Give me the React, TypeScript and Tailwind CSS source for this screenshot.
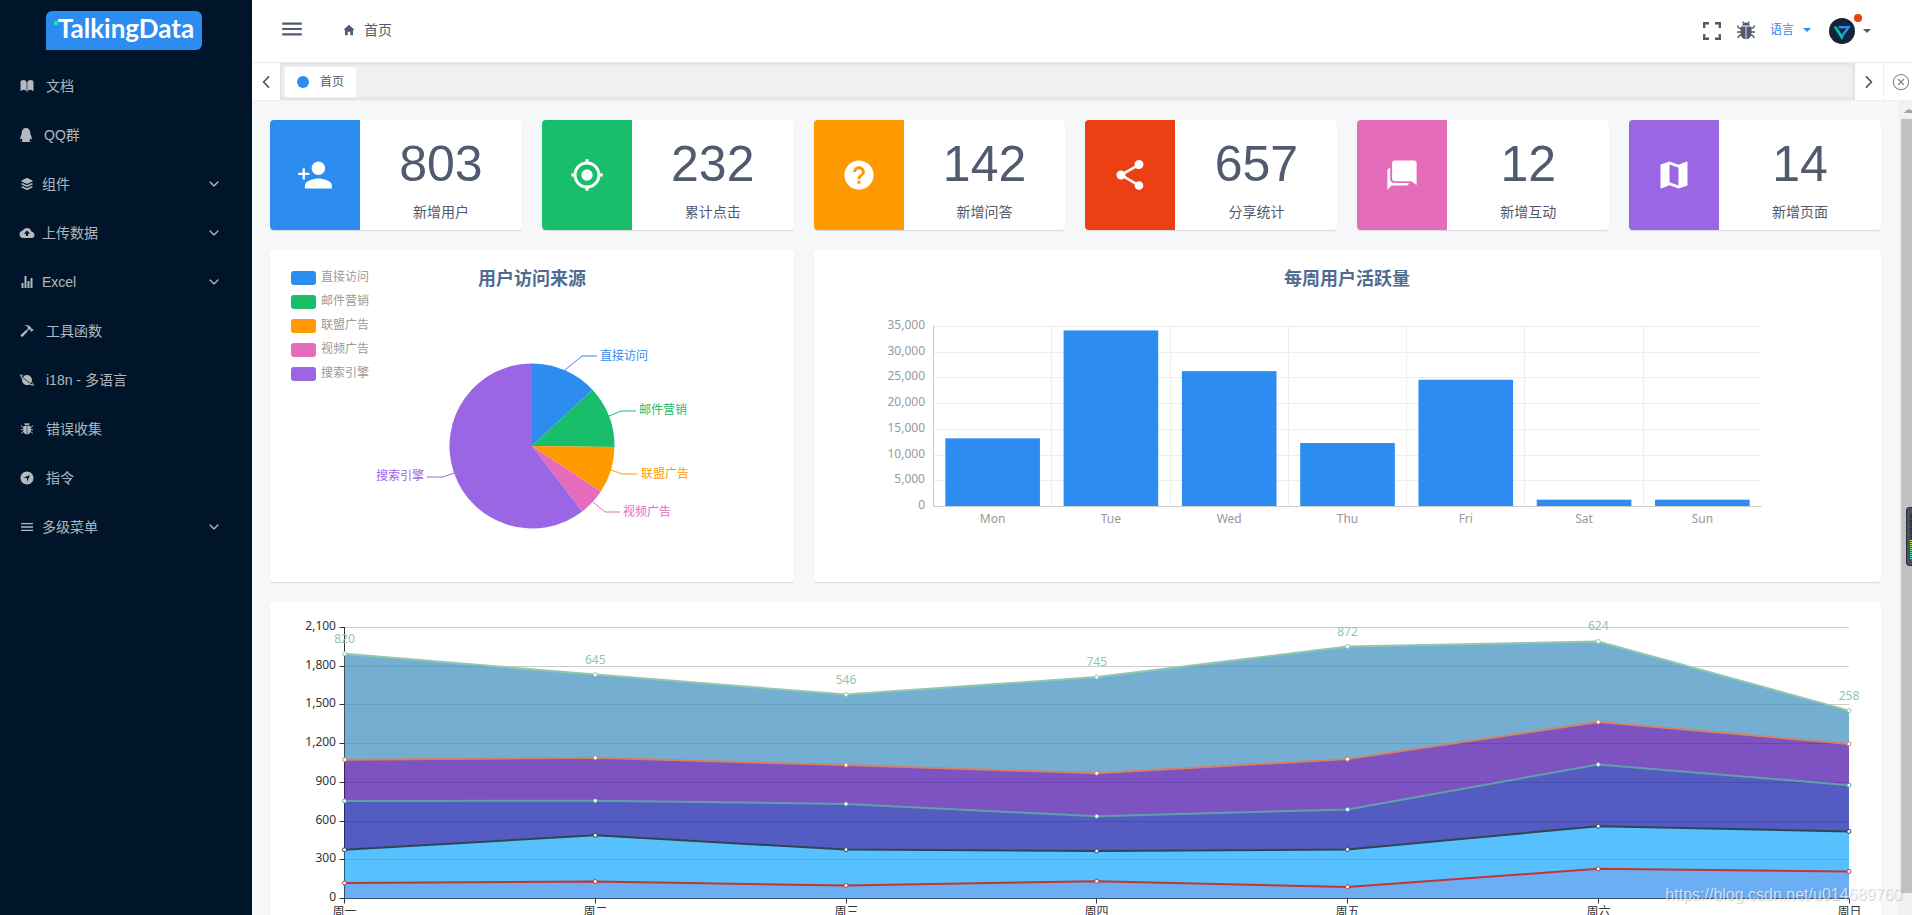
import { ReactNode } from 'react';
import {
  IoIosArrowBack,
  IoIosArrowDown,
  IoIosArrowForward,
  IoIosBook,
  IoIosCloseCircleOutline,
  IoIosHammer,
  IoIosNavigate,
  IoIosStats,
  IoLogoBuffer,
  IoMdArrowDropdown,
  IoMdChatbubbles,
  IoMdCloudUpload,
  IoMdExpand,
  IoMdHelpCircle,
  IoMdHome,
  IoMdLocate,
  IoMdMap,
  IoMdMenu,
  IoMdPersonAdd,
  IoMdPlanet,
  IoMdShare,
} from 'react-icons/io';
import { FaQq } from 'react-icons/fa';

const BugIcon = ({ size }: { size: number }) => (
  <svg viewBox="0 0 24 24" width={size} height={size} fill="currentColor">
    <path d="M8 6.500C8.600 4.700 10 3.500 12 3.500s3.400 1.200 4 3z" />
    <path d="M7 7.500h4.600v12.800C8.500 20 6.500 17.300 6.500 13.500 6.500 11 6.500 9 7 7.500zM12.400 7.500H17c.5 1.500.5 3.500.5 6 0 3.800-2 6.500-5.100 6.800z" />
    <path
      d="M3.500 6.500c.3 2 1.500 3 3.500 3M20.500 6.500c-.3 2-1.500 3-3.500 3M3 13h4M21 13h-4M4 19c.3-2 1.400-3 3.500-3M20 19c-.3-2-1.400-3-3.500-3M8.500 2.800l1.500 1.700M15.500 2.800L14 4.500"
      fill="none"
      stroke="currentColor"
      strokeWidth="1.4"
    />
  </svg>
);

const menuItems: { title: string; icon: ReactNode; children?: boolean }[] = [
  { title: '文档', icon: <IoIosBook size={16} /> },
  { title: 'QQ群', icon: <FaQq className="h-[14px] w-[14px]" /> },
  { title: '组件', icon: <IoLogoBuffer size={16} />, children: true },
  { title: '上传数据', icon: <IoMdCloudUpload size={16} />, children: true },
  { title: 'Excel', icon: <IoIosStats size={16} />, children: true },
  { title: '工具函数', icon: <IoIosHammer size={16} /> },
  { title: 'i18n - 多语言', icon: <IoMdPlanet size={16} /> },
  { title: '错误收集', icon: <BugIcon size={16} /> },
  { title: '指令', icon: <IoIosNavigate size={16} /> },
  { title: '多级菜单', icon: <IoMdMenu size={16} />, children: true },
];

const infoCards = [
  { title: '新增用户', icon: IoMdPersonAdd, count: 803, color: 'bg-[#2d8cf0]' },
  { title: '累计点击', icon: IoMdLocate, count: 232, color: 'bg-[#19be6b]' },
  { title: '新增问答', icon: IoMdHelpCircle, count: 142, color: 'bg-[#ff9900]' },
  { title: '分享统计', icon: IoMdShare, count: 657, color: 'bg-[#ed3f14]' },
  { title: '新增互动', icon: IoMdChatbubbles, count: 12, color: 'bg-[#e46cbb]' },
  { title: '新增页面', icon: IoMdMap, count: 14, color: 'bg-[#9a66e4]' },
];

const pieData = [
  { name: '直接访问', value: 335, color: '#2d8cf0', line: '295,120 312,106 327,106', x: 330, y: 110 },
  { name: '邮件营销', value: 310, color: '#19be6b', line: '339,166 351,161 366,161', x: 369, y: 164 },
  { name: '联盟广告', value: 234, color: '#ff9900', line: '341,220 352,224 367,224', x: 371, y: 228 },
  { name: '视频广告', value: 135, color: '#e46cbb', line: '323,252 335,262 350,262', x: 353, y: 266 },
  { name: '搜索引擎', value: 1548, color: '#9a66e4', line: '184,223 173,227 157,227', x: 106, y: 230 },
];

const barData = [
  { day: 'Mon', value: 13253 },
  { day: 'Tue', value: 34235 },
  { day: 'Wed', value: 26321 },
  { day: 'Thu', value: 12340 },
  { day: 'Fri', value: 24643 },
  { day: 'Sat', value: 1322 },
  { day: 'Sun', value: 1324 },
];

const weekDays = ['周一', '周二', '周三', '周四', '周五', '周六', '周日'];

const series = [
  { area: '#2d8cf0', line: '#c23531', data: [120, 132, 101, 134, 90, 230, 210] },
  { area: '#10a6ff', line: '#2f4554', data: [257, 358, 278, 234, 290, 330, 310] },
  { area: '#0c17a6', line: '#61a0a8', data: [379, 268, 354, 269, 310, 478, 358] },
  { area: '#4608a6', line: '#d48265', data: [320, 332, 301, 334, 390, 330, 320] },
  { area: '#398dbf', line: '#91c7ae', data: [820, 645, 546, 745, 872, 624, 258] },
];

const Card = ({ className = '', children }: { className?: string; children: ReactNode }) => (
  <section className={`overflow-hidden rounded bg-white shadow-[0_1px_1px_rgba(0,0,0,0.12)] ${className}`}>
    {children}
  </section>
);

const Sidebar = () => (
  <aside className="flex w-[252px] shrink-0 flex-col bg-[#001529] text-sm text-white/70">
    <a href="#home" className="flex h-[61px] items-center justify-center pr-1">
      <span className="relative flex h-[39px] w-[156px] items-center justify-center rounded-md rounded-bl-none bg-[#2d8cf0] pb-1 pl-1 font-['Lato',sans-serif] text-[26px] font-bold text-white">
        <i className="absolute top-[10px] left-2 size-1 bg-[#19e6a5]" />
        TalkingData
      </span>
    </a>
    <nav>
      <ul>
        {menuItems.map(({ title, icon, children }) => (
          <li key={title}>
            <a
              href={`#${title}`}
              className={`flex h-[49px] items-center pr-[31px] pl-[19px] ${children ? 'gap-[7px]' : 'gap-[11px]'}`}
            >
              {icon}
              <span className="flex-1">{title}</span>
              {children && <IoIosArrowDown size={14} />}
            </a>
          </li>
        ))}
      </ul>
    </nav>
  </aside>
);

const Avatar = () => (
  <span className="relative">
    <svg viewBox="0 0 26 26" className="size-[26px]">
      <circle cx="13" cy="13" r="13" fill="#17233d" />
      <path d="M4.500 8.500h3L14.500 19 13 22z" fill="#00cc99" />
      <path d="M9 8h13l-8 11-1.500-2.500L17.500 10.500H10.500z" fill="#2d8cf0" />
    </svg>
    <i className="absolute -top-1 -right-[7px] size-2 rounded-full bg-[#ed3f14]" />
  </span>
);

const Header = () => (
  <header className="flex h-[63px] shrink-0 items-center border-b border-[#e8eaec] bg-white pr-[37px] pl-[27px] text-[#515a6e]">
    <button type="button" aria-label="menu" className="pb-1">
      <IoMdMenu size={26} />
    </button>
    <a href="#home" className="ml-[37px] flex items-center gap-2 pb-0.5 text-sm">
      <IoMdHome size={14} />
      首页
    </a>
    <button type="button" aria-label="fullscreen" className="ml-auto">
      <IoMdExpand size={24} />
    </button>
    <button type="button" aria-label="errors" className="ml-[10px]">
      <BugIcon size={24} />
    </button>
    <button type="button" className="ml-3 flex items-center gap-[5px] pb-0.5 text-xs text-[#2d8cf0]">
      语言
      <IoMdArrowDropdown size={16} />
    </button>
    <button type="button" aria-label="user" className="ml-[14px] flex items-center gap-1">
      <Avatar />
      <IoMdArrowDropdown size={16} />
    </button>
  </header>
);

const TagsNav = () => (
  <div className="flex h-[38px] shrink-0 border-b border-[#f0f0f0] bg-white text-[#515a6e]">
    <button type="button" aria-label="previous" className="flex w-7 items-center justify-center">
      <IoIosArrowBack size={18} />
    </button>
    <div className="flex flex-1 items-center bg-[#f0f0f0] px-[5px] shadow-[inset_0_0_3px_2px_rgba(100,100,100,0.1)]">
      <a href="#home" className="flex h-[30px] items-center gap-[11px] rounded-[3px] bg-white px-3 text-xs">
        <i className="size-3 rounded-full bg-[#2d8cf0]" />
        首页
      </a>
    </div>
    <button type="button" aria-label="next" className="flex w-7 items-center justify-center">
      <IoIosArrowForward size={18} />
    </button>
    <button
      type="button"
      aria-label="close"
      className="flex w-[29px] items-center justify-end border-l border-[#f0f0f0] pr-px text-[#808695]"
    >
      <IoIosCloseCircleOutline size={20} />
    </button>
  </div>
);

const PieChart = () => {
  const total = pieData.reduce((sum, item) => sum + item.value, 0);
  const cx = 262;
  const cy = 196;
  const r = 82.5;
  let start = 0;

  return (
    <svg viewBox="0 0 520 332" preserveAspectRatio="xMinYMin meet" className="h-[332px] w-full text-xs">
      <text x={cx} y="35" textAnchor="middle" fill="#516b91" className="text-lg font-bold">
        用户访问来源
      </text>
      {pieData.map((item, index) => {
        const from = start;
        const to = start + (item.value / total) * Math.PI * 2;
        start = to;
        const large = to - from > Math.PI ? 1 : 0;
        return (
          <g key={item.name}>
            <rect x="21" y={21 + index * 24} width="25" height="14" rx="3" fill={item.color} />
            <text x="51" y={31 + index * 24} fill="#999">
              {item.name}
            </text>
            <path
              d={`M${cx} ${cy}L${cx + r * Math.sin(from)} ${cy - r * Math.cos(from)}A${r} ${r} 0 ${large} 1 ${cx + r * Math.sin(to)} ${cy - r * Math.cos(to)}Z`}
              fill={item.color}
            />
            <polyline points={item.line} fill="none" stroke={item.color} />
            <text x={item.x} y={item.y} fill={item.color}>
              {item.name}
            </text>
          </g>
        );
      })}
    </svg>
  );
};

const BarChart = () => {
  const left = 119.5;
  const right = 947.5;
  const top = 76.5;
  const bottom = 256.5;
  const slot = (right - left) / barData.length;
  const toY = (value: number) => bottom - (value / 35000) * (bottom - top);

  return (
    <svg
      viewBox="0 0 1060 332"
      preserveAspectRatio="xMinYMin meet"
      className="h-[332px] w-full font-['Noto_Sans','Noto_Sans_CJK_SC',sans-serif] text-xs"
    >
      <text x="533" y="35" textAnchor="middle" fill="#516b91" className="text-lg font-bold">
        每周用户活跃量
      </text>
      {[0, 5000, 10000, 15000, 20000, 25000, 30000, 35000].map((tick) => {
        const y = Math.floor(toY(tick)) + 0.5;
        return (
          <g key={tick}>
            <line x1={left} x2={right} y1={y} y2={y} stroke="#eee" />
            <text x="111" y={y + 2.5} textAnchor="end" fill="#999">
              {tick.toLocaleString('en-US')}
            </text>
          </g>
        );
      })}
      {barData.map(({ day, value }, index) => {
        const x = left + slot * index;
        const lineX = Math.floor(x) + 0.5;
        return (
          <g key={day}>
            {index > 0 && <line x1={lineX} x2={lineX} y1={top} y2={bottom} stroke="#eee" />}
            <rect x={x + slot * 0.1} y={toY(value)} width={slot * 0.8} height={bottom - toY(value)} fill="#2d8cf0" />
            <text x={x + slot / 2} y="273" textAnchor="middle" fill="#999">
              {day}
            </text>
          </g>
        );
      })}
      <path d={`M${left} 75V${bottom}H${right}`} fill="none" stroke="#ccc" />
    </svg>
  );
};

const AreaChart = () => {
  const left = 74.5;
  const right = 1579;
  const top = 25.5;
  const bottom = 296.5;
  const toX = (index: number) => left + ((right - left) / 6) * index;
  const toY = (value: number) => bottom - (value / 2100) * (bottom - top);

  // every series sits on the sum of the ones before it
  const stacks = [weekDays.map(() => 0)];
  series.forEach(({ data }, index) => {
    stacks.push(data.map((value, day) => stacks[index][day] + value));
  });
  const toPoints = (values: number[]) => values.map((value, day) => `${toX(day)},${toY(value)}`);

  return (
    <svg
      viewBox="0 0 1600 350"
      preserveAspectRatio="xMinYMin meet"
      className="h-[350px] w-full overflow-visible font-['Noto_Sans','Noto_Sans_CJK_SC',sans-serif] text-xs"
    >
      {[0, 300, 600, 900, 1200, 1500, 1800, 2100].map((tick) => {
        const y = Math.floor(toY(tick)) + 0.5;
        return (
          <g key={tick}>
            <line x1={left} x2={right} y1={y} y2={y} stroke="#ccc" />
            <line x1={left - 5} x2={left} y1={y} y2={y} stroke="#333" />
            <text x="66" y={y + 2.5} textAnchor="end" fill="#333">
              {tick.toLocaleString('en-US')}
            </text>
          </g>
        );
      })}
      <path d={`M${left} 25V${bottom}H${right}`} fill="none" stroke="#333" />
      {weekDays.map((day, index) => {
        const x = Math.floor(toX(index)) + 0.5;
        return (
          <g key={day}>
            <line x1={x} x2={x} y1={bottom} y2={bottom + 5} stroke="#333" />
            <text x={x} y="314" textAnchor="middle" fill="#333">
              {day}
            </text>
          </g>
        );
      })}
      {series.map(({ area }, index) => (
        <polygon
          key={area}
          points={[...toPoints(stacks[index + 1]), ...toPoints(stacks[index]).reverse()].join(' ')}
          fill={area}
          opacity="0.7"
        />
      ))}
      {series.map(({ line }, index) => (
        <g key={line} stroke={line}>
          <polyline points={toPoints(stacks[index + 1]).join(' ')} fill="none" strokeWidth="2" />
          {stacks[index + 1].map((value, day) => (
            <circle key={day} cx={toX(day)} cy={toY(value)} r="2" fill="#fff" />
          ))}
        </g>
      ))}
      {series[4].data.map((value, day) => (
        <text key={day} x={toX(day)} y={toY(stacks[5][day]) - 11} textAnchor="middle" fill="#91c7ae">
          {value}
        </text>
      ))}
    </svg>
  );
};

const Scrollbar = () => (
  <div className="flex w-[13px] shrink-0 flex-col bg-[#f1f1f1] pb-[22px] pl-0.5">
    <svg viewBox="0 0 11 18" className="h-[18px] w-[11px] shrink-0">
      <path d="M3 12h8V9.500L7 8z" fill="#a3a3a3" />
    </svg>
    <div className="flex-1 bg-[#c1c1c1]" />
  </div>
);

const SideWidget = () => (
  <div className="absolute top-[507px] right-0 flex h-[59px] w-[6px] flex-col items-end justify-center gap-px rounded-l border border-r-0 border-[#2b2f3a] bg-[#4a5060]">
    {Array.from({ length: 23 }, (_, index) => (
      <i
        key={index}
        className={`h-px w-0.5 ${index < 13 ? 'bg-[#23262f]' : index < 16 ? 'bg-[#c3e055]' : index < 19 ? 'bg-[#7ee07a]' : 'bg-[#4fe0c0]'}`}
      />
    ))}
  </div>
);

export default function App() {
  return (
    <div className="relative flex h-screen overflow-hidden bg-[#f5f7f9] font-['Liberation_Sans','Noto_Sans_CJK_SC',sans-serif] text-[#515a6e]">
      <Sidebar />
      <div className="flex min-w-0 flex-1 flex-col">
        <Header />
        <TagsNav />
        <div className="flex min-h-0 flex-1">
          <main className="min-w-0 flex-1 overflow-hidden px-[18px] pt-[19px]">
            <div className="grid grid-cols-6 gap-5">
              {infoCards.map(({ title, icon: Icon, count, color }) => (
                <Card key={title} className="flex h-[110px]">
                  <div className={`flex w-[90px] items-center justify-center text-white ${color}`}>
                    <Icon size={36} />
                  </div>
                  <div className="flex flex-1 flex-col items-center justify-center pt-2">
                    <p className="text-[50px] leading-[56px]">{count}</p>
                    <p className="pt-[10px] text-sm">{title}</p>
                  </div>
                </Card>
              ))}
            </div>
            <div className="mt-5 grid grid-cols-3 gap-5">
              <Card>
                <PieChart />
              </Card>
              <Card className="col-span-2">
                <BarChart />
              </Card>
            </div>
            <Card className="mt-5">
              <AreaChart />
            </Card>
          </main>
          <Scrollbar />
        </div>
      </div>
      <SideWidget />
      <span className="absolute right-[10px] bottom-2 text-base text-white/70 [text-shadow:1px_1px_1px_rgba(0,0,0,0.2)]">
        https://blog.csdn.net/u014689760
      </span>
    </div>
  );
}
